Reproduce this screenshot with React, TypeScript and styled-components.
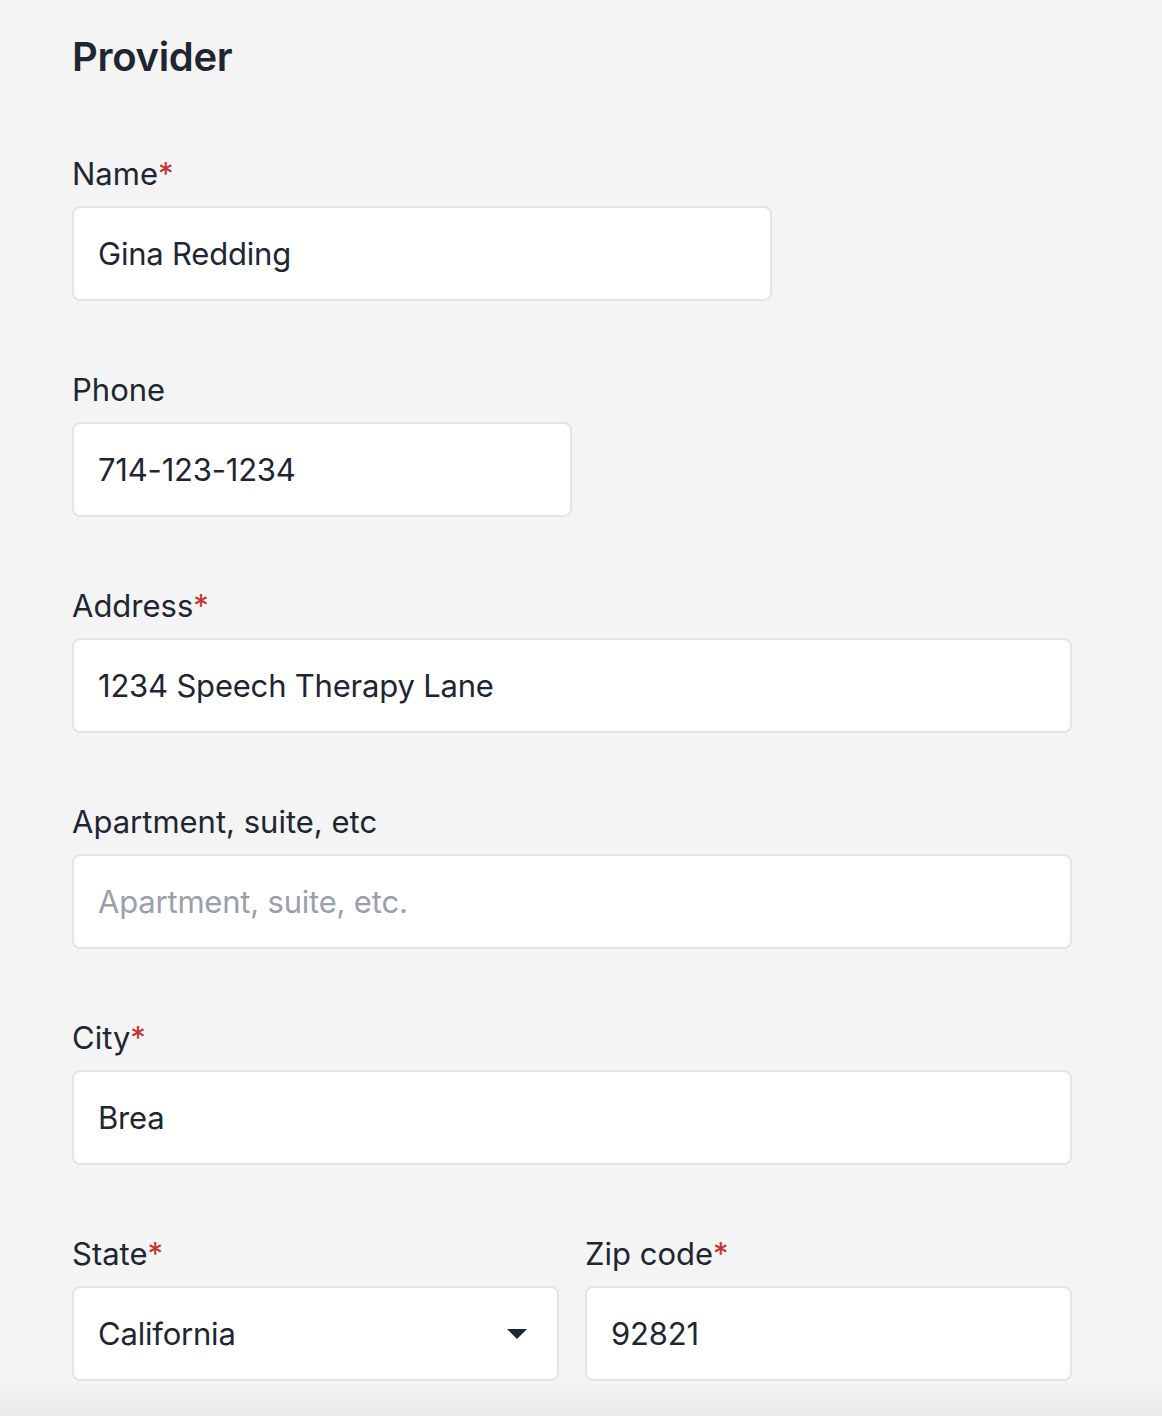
import styled, { createGlobalStyle } from "styled-components";

const GlobalStyle = createGlobalStyle`
  * {
    box-sizing: border-box;
  }
  body {
    margin: 0;
    background: #f4f4f4;
    font-family: Inter, "Noto Sans", sans-serif;
    color: #1f2633;
  }
`;

type FieldProps = {
  label: string;
  required?: boolean;
  value?: string;
  placeholder?: string;
  width?: number;
};

const Field: React.FC<FieldProps> = ({ label, required, value, placeholder, width }) => {
  return (
    <FieldBox $width={width}>
      <Label>
        {label}
        {required && <Star>*</Star>}
      </Label>
      <Input defaultValue={value} placeholder={placeholder} />
    </FieldBox>
  );
};

const App: React.FC = () => {
  return (
    <Page>
      <GlobalStyle />
      <Title>Provider</Title>
      <Form>
        <Field label="Name" required value="Gina Redding" width={700} />
        <Field label="Phone" value="714-123-1234" width={500} />
        <Field label="Address" required value="1234 Speech Therapy Lane" />
        <Field label="Apartment, suite, etc" placeholder="Apartment, suite, etc." />
        <Field label="City" required value="Brea" />
        <Row>
          <FieldBox>
            <Label>
              State<Star>*</Star>
            </Label>
            <SelectBox>
              <SelectValue>California</SelectValue>
              <Caret viewBox="0 0 20 10">
                <path d="M0 0h20L10 10z" />
              </Caret>
            </SelectBox>
          </FieldBox>
          <Field label="Zip code" required value="92821" />
        </Row>
      </Form>
      <FooterShade />
    </Page>
  );
};

const Page = styled.main`
  min-height: 1416px;
  padding: 33px 0 0 72px;
  display: flex;
  flex-direction: column;
`;

const Title = styled.h1`
  margin: 0;
  font-size: 40px;
  line-height: 48px;
  font-weight: 600;
  letter-spacing: -0.3px;
  color: #1f2633;
`;

const Form = styled.div`
  margin-top: 73px;
  width: 1000px;
  display: flex;
  flex-direction: column;
  gap: 69px;
`;

const FieldBox = styled.div<{ $width?: number }>`
  display: flex;
  flex-direction: column;
  gap: 12px;
  width: ${({ $width }) => ($width ? `${$width}px` : "100%")};
`;

const Label = styled.label`
  font-size: 31px;
  line-height: 40px;
  font-weight: 400;
  color: #1f2633;
`;

const Star = styled.span`
  color: #c8322d;
`;

const Input = styled.input`
  height: 95px;
  width: 100%;
  padding: 0 24px;
  border: 2px solid #e5e5e9;
  border-radius: 8px;
  background: #ffffff;
  font-family: Inter, "Noto Sans", sans-serif;
  font-size: 31px;
  letter-spacing: -0.2px;
  color: #1f2633;
  outline: none;

  &::placeholder {
    color: #9aa0ab;
  }
`;

const Row = styled.div`
  display: grid;
  grid-template-columns: 1fr 1fr;
  column-gap: 26px;
`;

const SelectBox = styled.div`
  height: 95px;
  padding: 0 30px 0 24px;
  border: 2px solid #e5e5e9;
  border-radius: 8px;
  background: #ffffff;
  display: flex;
  align-items: center;
  justify-content: space-between;
`;

const SelectValue = styled.span`
  font-size: 31px;
  letter-spacing: -0.2px;
  color: #1f2633;
`;

const Caret = styled.svg`
  width: 20px;
  height: 10px;
  fill: #1f2633;
`;

const FooterShade = styled.div`
  margin-top: auto;
  margin-left: -72px;
  height: 32px;
  background: linear-gradient(to bottom, #f4f4f4, #eaeaea);
`;

export default App;
